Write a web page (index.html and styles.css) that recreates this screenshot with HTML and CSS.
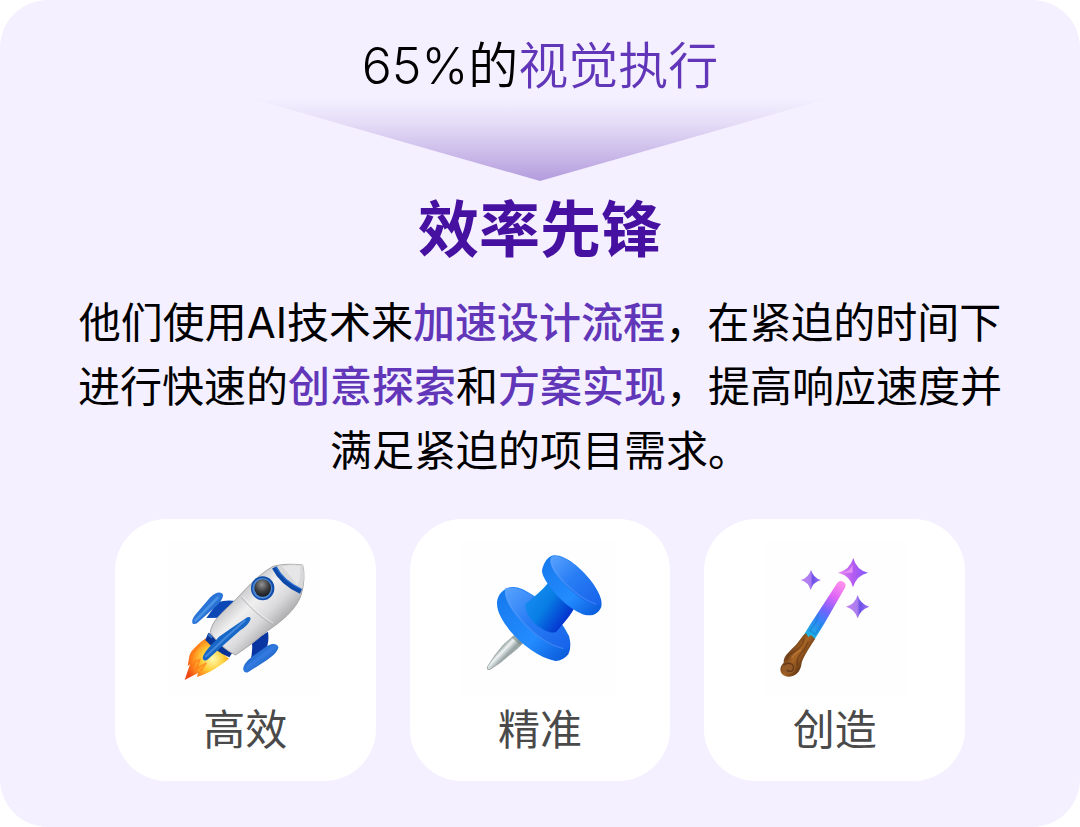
FILE: index.html
```html
<!DOCTYPE html>
<html lang="zh-CN">
<head>
<meta charset="utf-8">
<meta name="viewport" content="width=device-width, initial-scale=1">
<title>效率先锋</title>
<link rel="stylesheet" href="styles.css">
</head>
<body>
<main class="panel">
  <p class="stat">65%的<span class="stat-accent">视觉执行</span></p>
  <svg class="arrow" viewBox="0 0 580 83" aria-hidden="true">
    <defs><linearGradient id="fade" x1="0" y1="0" x2="0" y2="1"><stop offset="0" stop-color="#b49cdd" stop-opacity="0"/><stop offset=".3" stop-color="#b49cdd" stop-opacity=".23"/><stop offset="1" stop-color="#b49cdd"/></linearGradient></defs>
    <path d="M0 0H580L290 83Z" fill="url(#fade)"/>
  </svg>
  <h1 class="title">效率先锋</h1>
  <p class="summary">他们使用AI技术来<strong>加速设计流程</strong>，在紧迫的时间下进行快速的<strong>创意探索</strong>和<strong>方案实现</strong>，提高响应速度并满足紧迫的项目需求。</p>
  <ul class="cards">
    <li class="card">
      <svg class="icon" viewBox="0 0 510 480" aria-hidden="true">
        <defs>
          <linearGradient id="hull" gradientUnits="userSpaceOnUse" x1="225" y1="180" x2="335" y2="290"><stop offset="0" stop-color="#c4c4c6"/><stop offset=".35" stop-color="#f0f0f1"/><stop offset=".7" stop-color="#d9d9db"/><stop offset="1" stop-color="#adadb0"/></linearGradient>
          <linearGradient id="fin" x1="0" y1="0" x2="1" y2="1"><stop offset="0" stop-color="#0c4db4"/><stop offset=".5" stop-color="#2f79dc"/><stop offset="1" stop-color="#0b3fa4"/></linearGradient>
          <radialGradient id="flame" gradientUnits="userSpaceOnUse" cx="158" cy="372" r="85"><stop offset="0" stop-color="#fffbb0"/><stop offset=".4" stop-color="#ffce38"/><stop offset=".7" stop-color="#ff8a1c"/><stop offset="1" stop-color="#ee4714"/></radialGradient>
          <radialGradient id="glass" cx=".45" cy=".3" r=".7"><stop offset="0" stop-color="#949494"/><stop offset=".6" stop-color="#3c3c3e"/><stop offset="1" stop-color="#171b22"/></radialGradient>
        </defs>
        <rect x="22" y="18" width="462" height="462" fill="#fefefe"/>
        <path d="M137 310C118 325 91 346 88 364L83 393L90 388L74 435L114 414L111 426C151 414 187 387 207 371Z" fill="url(#flame)"/>
        <path d="M93 405L106 380L119 374L110 401L139 384L122 407M97 356L120 330" fill="none" stroke="#ff7718" stroke-width="5" opacity=".65"/>
        <path d="M173 202Q197 193 228 198L188 248L139 249Z" fill="#0b47b5"/>
        <path d="M275 321L324 290Q329 327 315 345L270 383Q280 345 275 321Z" fill="#0835a2"/>
        <path d="M98 266C94 257 98 249 106 239L151 187C166 171 184 168 189 179C190 190 178 207 163 218L116 260Q107 270 98 266Z" fill="url(#fin)"/>
        <path d="M106 257L173 188" stroke="#4b94e5" stroke-width="7" stroke-linecap="round"/>
        <path d="M250 405C248 393 257 380 276 365L321 333C338 323 354 326 355 337C353 352 336 365 320 376L265 411Q254 416 250 405Z" fill="url(#fin)"/>
        <path d="M262 395L341 338" stroke="#3479e2" stroke-width="8" stroke-linecap="round"/>
        <path d="M145 293L218 352L208 367Q168 351 136 315Z" fill="#093394"/>
        <path d="M145 297L157 307" stroke="#3b70c0" stroke-width="9"/>
        <path d="M151 293C153 261 185 234 219 202C254 167 287 124 339 94Q378 84 428 90Q438 129 423 181C408 224 364 260 323 287L278 324L227 360C198 347 172 322 151 293Z" fill="url(#hull)" stroke="#a6a6a9" stroke-width="3"/>
        <path d="M350 94Q385 86 428 90Q437 130 425 164Q377 139 350 94Z" fill="#d8d8d9"/>
        <path d="M367 94Q397 88 421 93Q423 128 413 151Z" fill="#eeeeef" opacity=".65"/>
        <path d="M343 97Q367 145 423 169" fill="none" stroke="#0d49a9" stroke-width="15"/>
        <path d="M348 96Q373 139 423 162" fill="none" stroke="#2c70d3" stroke-width="4"/>
        <path d="M244 187Q284 235 337 269" fill="none" stroke="#b4b4b7" stroke-width="3"/>
        <path d="M248 184Q287 232 339 264" fill="none" stroke="#f4f4f4" stroke-width="2"/>
        <ellipse cx="308" cy="160" rx="35" ry="36" fill="#104caa"/>
        <ellipse cx="307" cy="160" rx="30" ry="31" fill="#4b87d4"/>
        <ellipse cx="308" cy="159" rx="25" ry="26" fill="url(#glass)"/>
        <path d="M128 369C132 349 153 331 177 305L218 277L262 247Q272 243 272 252Q266 271 239 287L191 330L142 374Q130 381 128 369Z" fill="#1767c6"/>
        <path d="M138 364L195 310L254 257" fill="none" stroke="#4388dc" stroke-width="6" stroke-linecap="round"/>
      </svg>
      <span class="label">高效</span>
    </li>
    <li class="card">
      <svg class="icon" viewBox="0 0 510 480" aria-hidden="true">
        <defs>
          <linearGradient id="needle" gradientUnits="userSpaceOnUse" x1="134" y1="338" x2="156" y2="359"><stop offset="0" stop-color="#83918f"/><stop offset=".45" stop-color="#f0f4f4"/><stop offset="1" stop-color="#9aa5a5"/></linearGradient>
          <linearGradient id="stem" gradientUnits="userSpaceOnUse" x1="222" y1="190" x2="330" y2="264"><stop offset="0" stop-color="#148af0"/><stop offset=".4" stop-color="#087fe5"/><stop offset="1" stop-color="#0431ce"/></linearGradient>
          <linearGradient id="face" x1="0" y1="0" x2="1" y2="1"><stop offset="0" stop-color="#59a3ff"/><stop offset=".45" stop-color="#287df4"/><stop offset="1" stop-color="#1762ea"/></linearGradient>
          <linearGradient id="rim" x1="0" y1="0" x2="1" y2="1"><stop offset="0" stop-color="#1578ed"/><stop offset=".6" stop-color="#238cff"/><stop offset="1" stop-color="#0754d5"/></linearGradient>
        </defs>
        <rect x="18" y="18" width="468" height="462" fill="#fefefe"/>
        <path d="M179 300L206 321C186 345 163 358 137 382L104 404Q95 406 97 396Q120 357 146 329Z" fill="url(#needle)" stroke="#a2afad" stroke-width="3"/>
        <path d="M181 300L207 321L195 330L171 308Z" fill="#71837f" opacity=".6"/>
        <path d="M126 202C128 178 145 160 166 157C186 153 207 164 228 177C275 205 323 262 342 303Q351 335 340 358Q325 377 301 378C253 369 201 330 166 289C144 260 125 233 126 202Z" fill="url(#rim)"/>
        <path d="M151 160C172 152 208 162 242 189C292 228 333 280 345 323C346 340 331 347 312 339C272 328 220 286 185 243C159 211 146 181 151 160Z" fill="url(#face)"/>
        <path d="M151 170C158 222 243 321 325 341" fill="none" stroke="#63a5fd" stroke-width="4" opacity=".4"/>
        <path d="M211 206C233 189 260 168 280 143L359 215C350 240 323 266 302 292C264 298 207 245 211 206Z" fill="url(#stem)"/>
        <path d="M261 105C267 80 279 64 297 61C330 59 379 98 411 142C432 171 443 195 439 215C431 236 413 244 391 240C350 228 304 184 278 146Q260 120 261 105Z" fill="url(#rim)"/>
        <path d="M289 66C309 54 352 78 389 117C424 153 442 193 435 207C424 220 384 199 350 169C305 130 276 84 289 66Z" fill="url(#face)"/>
        <path d="M288 79C297 119 367 190 423 207" fill="none" stroke="#65a6fd" stroke-width="4" opacity=".35"/>
      </svg>
      <span class="label">精准</span>
    </li>
    <li class="card">
      <svg class="icon" viewBox="-15 0 510 480" aria-hidden="true">
        <defs>
          <linearGradient id="wand" gradientUnits="userSpaceOnUse" x1="258" y1="140" x2="158" y2="310"><stop offset="0" stop-color="#ff91eb"/><stop offset=".25" stop-color="#df65f6"/><stop offset=".5" stop-color="#7163ff"/><stop offset=".7" stop-color="#2e88f5"/><stop offset="1" stop-color="#19b9df"/></linearGradient>
          <linearGradient id="wood" gradientUnits="userSpaceOnUse" x1="103" y1="350" x2="148" y2="380"><stop offset="0" stop-color="#74421a"/><stop offset=".45" stop-color="#a76425"/><stop offset="1" stop-color="#6b3a14"/></linearGradient>
          <linearGradient id="spark" x1="0" y1="0" x2="1" y2="0"><stop offset="0" stop-color="#f08df0"/><stop offset=".5" stop-color="#b45bf1"/><stop offset="1" stop-color="#8158fb"/></linearGradient>
          <linearGradient id="spark-cool" x1="0" y1="0" x2="1" y2="0"><stop offset="0" stop-color="#c184f1"/><stop offset=".48" stop-color="#ac7cf0"/><stop offset=".6" stop-color="#6b50e6"/><stop offset="1" stop-color="#a473fa"/></linearGradient>
        </defs>
        <rect x="24" y="18" width="438" height="462" fill="#fefefe"/>
        <path d="M246 145Q254 134 266 141Q275 148 270 158C241 207 211 263 174 321L145 302C175 253 207 206 246 145Z" fill="url(#wand)"/>
        <path d="M190 236Q189 259 164 286L181 298L201 264" fill="none" stroke="#187ed0" stroke-width="4" opacity=".65"/>
        <path d="M145 301L153 295L160 306L168 300L180 312C161 342 147 362 140 383C137 414 115 429 92 424C72 416 72 395 86 383C83 360 113 343 128 323Z" fill="url(#wood)"/>
        <path d="M147 310Q147 332 119 349Q95 361 98 375M160 320Q150 343 133 361Q124 373 128 391" fill="none" stroke="#57300f" stroke-width="4" opacity=".5"/>
        <path d="M110 369Q124 350 138 345" fill="none" stroke="#d18b46" stroke-width="5" opacity=".5"/>
        <ellipse cx="101" cy="399" rx="20" ry="18" fill="#945a27"/>
        <path d="M85 391Q96 381 110 387Q121 397 111 408Q99 412 96 404" fill="none" stroke="#653a17" stroke-width="4"/>
        <path d="M295 69Q304 105 339 113Q304 121 294 157Q286 122 249 113Q284 105 295 69Z" fill="url(#spark)"/>
        <path d="M292 88Q288 109 265 113L293 113Z" fill="#f7acf6" opacity=".65"/>
        <path d="M168 104Q174 128 198 135Q174 141 167 165Q161 142 137 135Q161 128 168 104Z" fill="url(#spark-cool)"/>
        <path d="M308 180Q315 207 343 215Q316 223 308 250Q300 223 273 215Q300 208 308 180Z" fill="url(#spark-cool)"/>
      </svg>
      <span class="label">创造</span>
    </li>
  </ul>
</main>
</body>
</html>
```

FILE: styles.css
```css
* {
  box-sizing: border-box;
}

body {
  margin: 0;
  background: #fff;
  color: #000;
  font-family: Inter, "Noto Sans CJK SC", sans-serif;
}

.panel {
  display: flex;
  flex-direction: column;
  align-items: center;
  min-height: 100vh;
  padding: 34px 70px 46px;
  border-radius: 48px;
  background: #f4f0ff;
  text-align: center;
}

.stat {
  margin: 0;
  font-size: 50px;
  font-weight: 350;
  line-height: 64px;
}

.stat-accent {
  color: #6236b8;
}

.arrow {
  display: block;
  width: 580px;
  max-width: 100%;
}

.title {
  margin: 8px 0 20px;
  color: #4610a0;
  font-size: 61px;
  font-weight: 700;
  line-height: 82px;
}

.summary {
  margin: 0;
  font-size: 42px;
  font-weight: 400;
  line-height: 64px;
}

.summary strong {
  color: #6236b8;
  font-weight: 500;
}

.cards {
  display: grid;
  grid-template-columns: repeat(3, 1fr);
  gap: 34px;
  width: 100%;
  max-width: 850px;
  margin: 36px 0 0;
  padding: 0;
  list-style: none;
}

.card {
  display: flex;
  flex-direction: column;
  align-items: center;
  padding: 16px 0;
  border-radius: 52px;
  background: #fff;
}

.icon {
  display: block;
  width: 170px;
  max-width: 100%;
}

.label {
  color: #4a4a4a;
  font-size: 42px;
  line-height: 70px;
}
```
